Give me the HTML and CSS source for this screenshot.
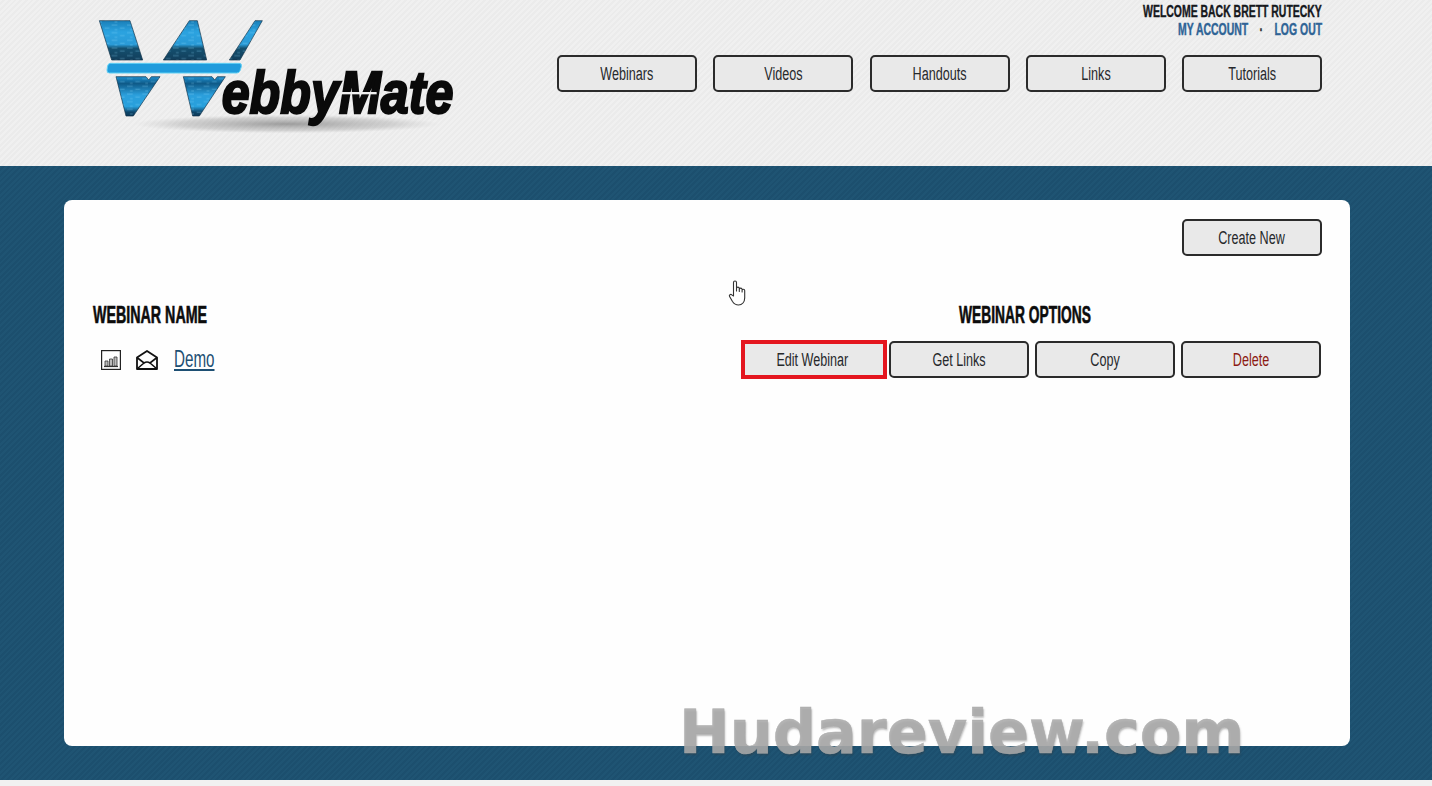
FILE: index.html
```html
<!DOCTYPE html>
<html lang="en">
<head>
  <meta charset="UTF-8" />
  <title>WebbyMate - Webinars</title>
  <link rel="stylesheet" href="styles.css">
</head>
<body>

  <header class="header">
    <a class="logo" href="#">
      <svg viewBox="0 0 1320 498" width="440" height="166" aria-label="WebbyMate">
        <defs>
          <linearGradient id="logoBlue" gradientUnits="userSpaceOnUse" x1="0" y1="62" x2="0" y2="348">
            <stop offset="0" stop-color="#1a7fb8"/>
            <stop offset="0.12" stop-color="#2ba3e0"/>
            <stop offset="0.25" stop-color="#2a9ad6"/>
            <stop offset="0.29" stop-color="#14506f"/>
            <stop offset="0.41" stop-color="#123f5c"/>
            <stop offset="0.48" stop-color="#2aa5e4"/>
            <stop offset="0.6" stop-color="#1b86c2"/>
            <stop offset="0.66" stop-color="#0f5a88"/>
            <stop offset="0.78" stop-color="#2b9fdc"/>
            <stop offset="0.9" stop-color="#28a0dc"/>
            <stop offset="0.96" stop-color="#0e4468"/>
            <stop offset="1" stop-color="#0b3a5a"/>
          </linearGradient>
          <radialGradient id="logoShadow">
            <stop offset="0" stop-color="#666" stop-opacity="0.6"/>
            <stop offset="0.7" stop-color="#888" stop-opacity="0.28"/>
            <stop offset="1" stop-color="#aaa" stop-opacity="0"/>
          </radialGradient>
          <pattern id="logoDash" patternUnits="userSpaceOnUse" width="46" height="23">
            <path d="M3 6h17M28 15h14M12 20h8" stroke="#8fdcfb" stroke-width="2.500" stroke-opacity="0.4"/>
          </pattern>
          <g id="logoW">
            <polygon points="58,62 150,62 188,180 95,180"/>
            <polygon points="328,62 352,62 380,180 250,180"/>
            <polygon points="525,62 547,62 480,180 448,180"/>
            <polygon points="108,230 198,230 206,240 214,230 240,230 160,348 138,348"/>
            <polygon points="310,230 396,230 404,240 412,230 436,230 358,348 338,348"/>
          </g>
        </defs>
        <ellipse cx="620" cy="372" rx="460" ry="28" fill="url(#logoShadow)"/>
        <use href="#logoW" fill="url(#logoBlue)" stroke="#0f2f45" stroke-width="2" stroke-linejoin="round"/>
        <use href="#logoW" fill="url(#logoDash)"/>
        <path d="M92 190H478Q486 190 484 200L480 212Q478 219 470 219H88Q80 219 81 210L83 198Q84 190 92 190Z" fill="#1f9bdc" stroke="#5fd0f5" stroke-width="3"/>
        <text class="logo-text" x="425" y="340" textLength="695" lengthAdjust="spacingAndGlyphs">ebbyMate</text>
        <rect x="775" y="276" width="115" height="7" fill="#efefef"/>
      </svg>
    </a>

    <div class="header-right">
      <div class="welcome">WELCOME BACK BRETT RUTECKY</div>
      <div class="account-links">
        <a href="#">MY ACCOUNT</a>
        <span class="dot">&middot;</span>
        <a href="#">LOG OUT</a>
      </div>
      <nav class="nav">
        <a class="btn" href="#"><span>Webinars</span></a>
        <a class="btn" href="#"><span>Videos</span></a>
        <a class="btn" href="#"><span>Handouts</span></a>
        <a class="btn" href="#"><span>Links</span></a>
        <a class="btn" href="#"><span>Tutorials</span></a>
      </nav>
    </div>
  </header>

  <main class="band">
    <section class="card">
      <div class="card-top">
        <a class="btn" href="#"><span>Create New</span></a>
      </div>

      <div class="table-head">
        <h2 class="name-head">WEBINAR NAME</h2>
        <h2 class="options-head">WEBINAR OPTIONS</h2>
      </div>

      <div class="webinar-row">
        <div class="webinar-name">
          <svg class="icon" viewBox="0 0 20 20" width="20" height="20">
            <rect x="0.6" y="0.6" width="18.800" height="18.800" fill="none" stroke="#222" stroke-width="1.200"/>
            <path d="M3 16.500H17" stroke="#333" stroke-width="1.200"/>
            <path d="M4 11h3v5H4zM8.500 9h3v7h-3zM13 7h3v9h-3z" fill="#bbb" stroke="#333" stroke-width="0.800"/>
          </svg>
          <svg class="icon icon-mail" viewBox="0 0 22 20" width="22" height="20">
            <path d="M1 7.500L11 1l10 6.500V19H1z" fill="none" stroke="#111" stroke-width="1.800" stroke-linejoin="round"/>
            <path d="M1 7.500L8 13q3-2 6 0l7-5.500M1.500 18.500L8 13M20.500 18.500L14 13" fill="none" stroke="#111" stroke-width="1.600"/>
          </svg>
          <a class="demo-link" href="#">Demo</a>
        </div>
        <div class="options">
          <a class="btn btn-marked" href="#"><span>Edit Webinar</span></a>
          <a class="btn" href="#"><span>Get Links</span></a>
          <a class="btn" href="#"><span>Copy</span></a>
          <a class="btn btn-delete" href="#"><span>Delete</span></a>
        </div>
      </div>
    </section>

    <svg class="cursor" viewBox="0 0 20 28" width="20" height="28">
      <path d="M5.500 17V3.500a1.500 1.500 0 0 1 3 0V12V9.500a1.400 1.400 0 0 1 2.800 0V12.500V10.500a1.400 1.400 0 0 1 2.800 0V13V11.500a1.300 1.300 0 0 1 2.600 0V19c0 4-2.500 7-6.200 7-3 0-4.500-1.200-6-3.500L1.600 17.500c-.9-1.500 1-2.800 2.200-1.600z" fill="#fff" stroke="#333" stroke-width="1.100" stroke-linejoin="round"/>
    </svg>
    <div class="watermark">Hudareview.com</div>
  </main>

  <div class="footer-strip"></div>

</body>
</html>
```

FILE: styles.css
```css
* {
  box-sizing: border-box;
  margin: 0;
  padding: 0;
}

body {
  font-family: 'Liberation Sans', sans-serif;
  background: #f1f1f1;
  color: #222;
  height: 786px;
  overflow: hidden;
}

a {
  text-decoration: none;
  color: inherit;
}

.header {
  height: 166px;
  display: flex;
  justify-content: space-between;
  padding: 0 110px 0 80px;
  background: repeating-linear-gradient(135deg, #f0f0f0 0, #f0f0f0 2px, #ebebeb 2px, #ebebeb 4px);
}

.logo {
  display: block;
  height: 166px;
}

.logo-text {
  font-weight: bold;
  font-style: italic;
  font-size: 180px;
  fill: #0a0a0a;
  stroke: #0a0a0a;
  stroke-width: 7px;
}

.header-right {
  display: flex;
  flex-direction: column;
  align-items: flex-end;
  padding-top: 3px;
}

/* no condensed font here, so the narrow type is squeezed */
.welcome,
.account-links {
  font-size: 15.600px;
  line-height: 18px;
  font-weight: bold;
  white-space: nowrap;
  transform: scaleX(0.67);
  transform-origin: right center;
  -webkit-text-stroke: 0.4px currentColor;
}

.welcome {
  color: #15181c;
}

.account-links {
  color: #2f6496;
  display: flex;
  gap: 17px;
}

.dot {
  color: #333;
}

.nav {
  display: flex;
  gap: 16.25px;
  margin-top: 16px;
}

.btn {
  display: flex;
  align-items: center;
  justify-content: center;
  width: 140px;
  height: 37px;
  padding-top: 2px;
  background: #e9e9e9;
  border: 2px solid #2b2b2b;
  border-radius: 5px;
  font-size: 18px;
  color: #26282b;
  white-space: nowrap;
}

.btn span {
  display: inline-block;
  transform: scaleX(0.7);
}

.band {
  position: relative;
  height: 614px;
  padding: 34px 82px 34px 64px;
  background: repeating-linear-gradient(135deg, #1f5473 0, #1f5473 2px, #1c4f6e 2px, #1c4f6e 4px);
}

.card {
  height: 546px;
  background: #fefefe;
  border-radius: 8px;
  padding: 19px 28px 0 29px;
}

.card-top {
  display: flex;
  justify-content: flex-end;
}

.table-head {
  display: flex;
  justify-content: space-between;
  margin-top: 47px;
}

.table-head h2 {
  font-size: 23px;
  line-height: 24px;
  font-weight: bold;
  color: #0c0c0c;
  white-space: nowrap;
  -webkit-text-stroke: 0.6px currentColor;
}

.name-head {
  transform: scaleX(0.62);
  transform-origin: left center;
}

.options-head {
  width: 594px;
  text-align: center;
  transform: scaleX(0.6);
}

.webinar-row {
  display: flex;
  justify-content: space-between;
  align-items: center;
  margin-top: 13px;
}

.webinar-name {
  display: flex;
  align-items: center;
  padding-left: 8px;
}

.icon-mail {
  margin-left: 15px;
}

.demo-link {
  margin-left: 16px;
  font-size: 23px;
  color: #1d4f73;
  text-decoration: underline;
  transform: scaleX(0.66);
  transform-origin: left center;
}

.options {
  display: flex;
  gap: 6px;
  align-items: center;
  margin-right: 1px;
}

.btn-marked {
  width: 146px;
  height: 39px;
  padding-right: 3px;
  border: 4px solid #e4161f;
  border-radius: 0;
  margin-right: -4px;
}

.btn-delete {
  color: #8c1a12;
}

/* over the card: the pointer and the site watermark */
.cursor {
  position: absolute;
  left: 728px;
  top: 113px;
}

.watermark {
  position: absolute;
  left: 679px;
  top: 531px;
  font-family: 'DejaVu Sans', sans-serif;
  font-weight: bold;
  font-size: 60.500px;
  line-height: 70px;
  color: rgba(170, 170, 170, 0.88);
  -webkit-text-stroke: 0.5px rgba(170, 170, 170, 0.88);
  text-shadow: 1px 2px 2px rgba(60, 60, 60, 0.35);
  white-space: nowrap;
}

.footer-strip {
  height: 6px;
  background: #f1f1f1;
}
```
